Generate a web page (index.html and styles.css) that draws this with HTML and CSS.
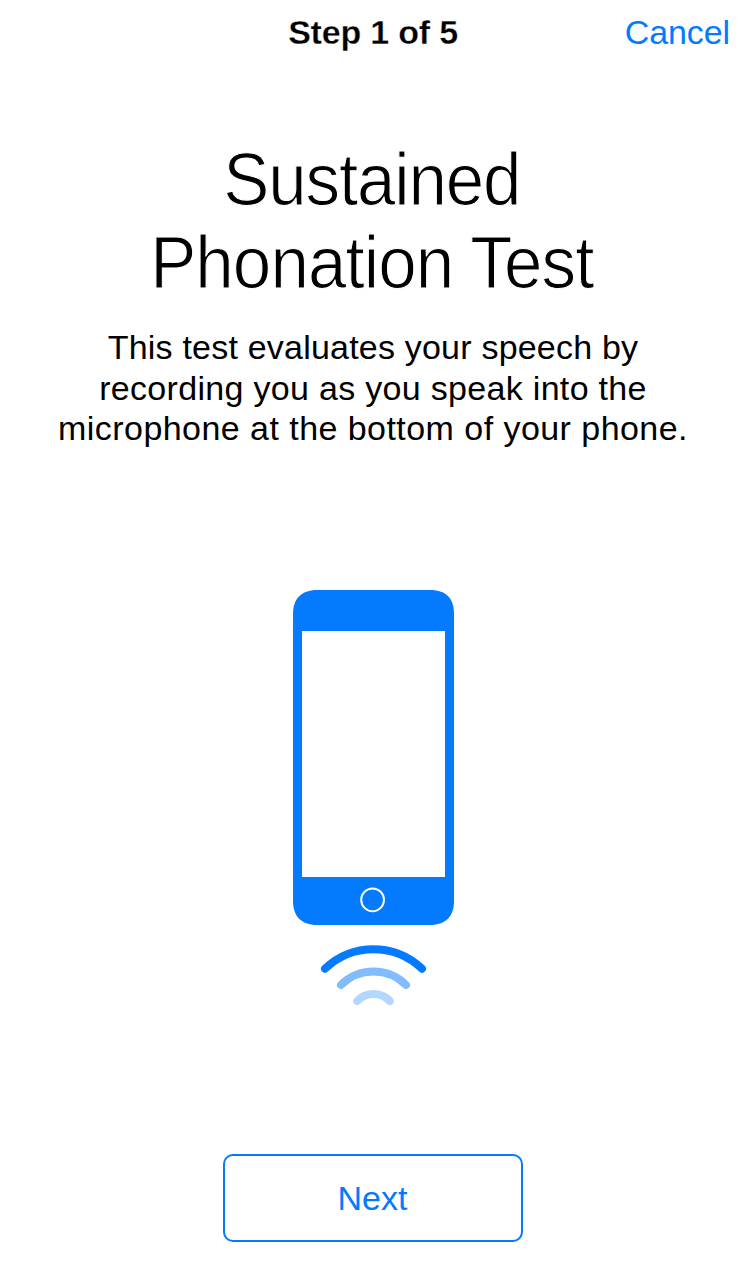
FILE: index.html
```html
<!DOCTYPE html>
<html lang="en">
<head>
<meta charset="utf-8">
<title>Sustained Phonation Test</title>
<link rel="stylesheet" href="styles.css">
</head>
<body>
<main class="screen">
  <header class="nav">
    <span class="nav-title">Step 1 of 5</span>
    <a class="cancel">Cancel</a>
  </header>
  <h1 class="title"><span class="title-a">Sustained</span><br><span class="title-b">Phonation Test</span></h1>
  <p class="body"><span class="line-a">This test evaluates your speech by</span><br><span class="line-b">recording you as you speak into the</span><br><span class="line-c">microphone at the bottom of your phone.</span></p>
  <svg class="phone" width="162" height="420" viewBox="292 590 162 420" fill="none">
    <path fill="#047aff" d="M317 590H430C447 590 454 599 454 614V901C454 916 446 925 430 925H317C301 925 293 916 293 901V614C293 599 301 590 317 590Z"/>
    <path fill="#fff" d="M302 631H445V877H302Z"/>
    <circle cx="372.6" cy="899.8" r="11.4" stroke="#fff" stroke-width="2"/>
    <g stroke-width="8" stroke-linecap="round">
      <path stroke="#047aff" d="M325 968.7A70 70 0 0 1 422 968.7"/>
      <path stroke="#81bcff" d="M341 985A46 46 0 0 1 406 985"/>
      <path stroke="#b3d7ff" d="M357.2 1001A22.5 22.5 0 0 1 389.8 1001"/>
    </g>
  </svg>
  <button class="next">Next</button>
</main>
</body>
</html>
```

FILE: styles.css
```css
body {
  margin: 0;
  background: #fff;
  color: #000;
  font-family: "Liberation Sans", Arial, sans-serif;
}
.screen {
  display: flex;
  flex-direction: column;
  align-items: center;
  width: 746px;
  height: 1278px;
}
.nav {
  display: grid;
  grid-template-columns: 1fr auto 1fr;
  width: 100%;
  height: 64px;
  font-size: 34px;
  line-height: 64px;
}
.nav-title {
  grid-column: 2;
  font-weight: bold;
  letter-spacing: -0.2px;
  -webkit-text-stroke: 0.3px #fff;
}
.cancel {
  justify-self: end;
  padding-right: 16px;
  color: #047aff;
  letter-spacing: -0.1px;
}
.title {
  margin: 74px 3px 0 0;
  font-size: 73.5px;
  font-weight: normal;
  line-height: 83px;
  text-align: center;
  white-space: nowrap;
  transform: scaleX(0.94);
  /* thins the strokes to a light weight */
  -webkit-text-stroke: 1.1px #fff;
}
.title-a {
  letter-spacing: -1.2px;
}
.title-b {
  letter-spacing: -0.95px;
}
.body {
  margin: 23px 0 0;
  font-size: 34px;
  line-height: 40.5px;
  text-align: center;
  white-space: nowrap;
}
.line-a {
  letter-spacing: 0.21px;
}
.line-b {
  letter-spacing: 0.31px;
}
.line-c {
  letter-spacing: 0.45px;
}
.phone {
  display: block;
  margin-top: 141.5px;
}
.next {
  box-sizing: border-box;
  width: 300px;
  height: 88px;
  margin-top: 144px;
  padding: 0 1px 0 0;
  border: 2px solid #047aff;
  border-radius: 10px;
  background: #fff;
  color: #047aff;
  font: 34px "Liberation Sans", Arial, sans-serif;
}
```
